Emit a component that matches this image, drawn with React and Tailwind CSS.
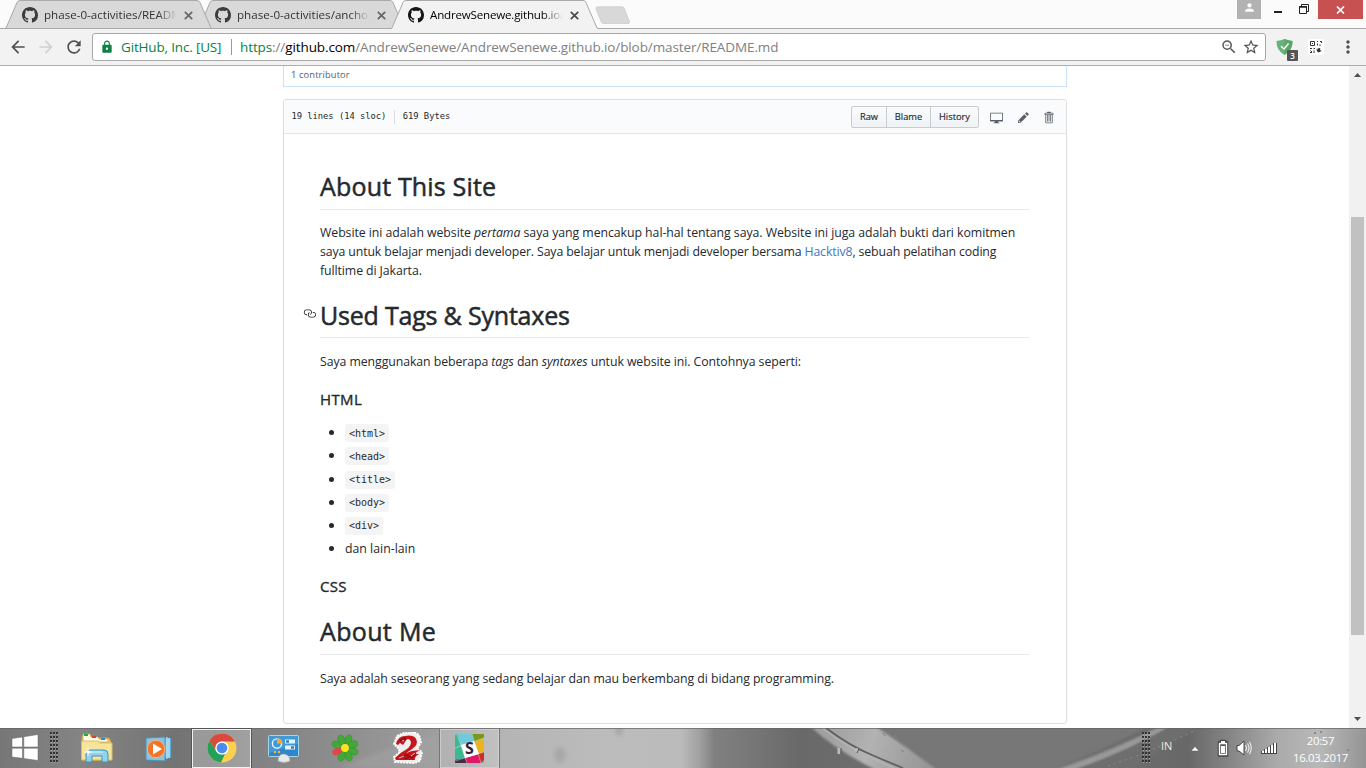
import React from "react";
import {
  MdArrowBack,
  MdArrowForward,
  MdRefresh,
  MdLock,
  MdZoomOut,
  MdStarBorder,
  MdMoreVert,
  MdPerson,
} from "react-icons/md";

const GITHUB =
  "M8 0C3.58 0 0 3.58 0 8c0 3.54 2.29 6.53 5.47 7.59.4.07.55-.17.55-.38 0-.19-.01-.82-.01-1.49-2.01.37-2.53-.49-2.69-.94-.09-.23-.48-.94-.82-1.13-.28-.15-.68-.52-.01-.53.63-.01 1.08.58 1.23.82.72 1.21 1.87.87 2.33.66.07-.52.28-.87.51-1.07-1.78-.2-3.64-.89-3.64-3.95 0-.87.31-1.59.82-2.15-.08-.2-.36-1.02.08-2.12 0 0 .67-.21 2.2.82.64-.18 1.32-.27 2-.27.68 0 1.36.09 2 .27 1.53-1.04 2.2-.82 2.2-.82.44 1.1.16 1.92.08 2.12.51.56.82 1.27.82 2.15 0 3.07-1.87 3.75-3.65 3.95.29.25.54.73.54 1.48 0 1.07-.01 1.93-.01 2.2 0 .21.15.46.55.38A8.013 8.013 0 0016 8c0-4.42-3.58-8-8-8z";
const DESKTOP =
  "M15 2H1c-.55 0-1 .45-1 1v9c0 .55.45 1 1 1h5.34c-.25.61-.86 1.39-2.34 2h8c-1.48-.61-2.09-1.39-2.34-2H15c.55 0 1-.45 1-1V3c0-.55-.45-1-1-1zm0 9H1V3h14v8z";
const PENCIL =
  "M0 12v3h3l8-8-3-3-8 8zm3 2H1v-2h1v1h1v1zm10.3-9.3L12 6 9 3l1.3-1.3a.996.996 0 0 1 1.41 0l1.59 1.59c.39.39.39 1.02 0 1.41z";
const TRASH =
  "M11 2H9c0-.55-.45-1-1-1H5c-.55 0-1 .45-1 1H2c-.55 0-1 .45-1 1v1c0 .55.45 1 1 1v9c0 .55.45 1 1 1h7c.55 0 1-.45 1-1V5c.55 0 1-.45 1-1V3c0-.55-.45-1-1-1zm-1 12H3V5h1v8h1V5h1v8h1V5h1v8h1V5h1v9zm1-10H2V3h9v1z";
const LINK =
  "M4 9h1v1H4c-1.5 0-3-1.69-3-3.5S2.55 3 4 3h4c1.45 0 3 1.69 3 3.5 0 1.41-.91 2.72-2 3.25V8.59c.58-.45 1-1.27 1-2.09C10 5.22 8.98 4 8 4H4c-.98 0-2 1.22-2 2.5S3 9 4 9zm9-3h-1v1h1c1 0 2 1.22 2 2.5S13.98 12 13 12H9c-.98 0-2-1.22-2-2.5 0-.83.42-1.64 1-2.09V6.25c-1.09.53-2 1.84-2 3.25C6 11.31 7.55 13 9 13h4c1.45 0 3-1.69 3-3.5S14.5 6 13 6z";

function Tab({ title, active, className }) {
  return (
    <div className={"relative h-[29px] w-[207px] shrink-0 " + className}>
      <svg className="absolute inset-0" width="207" height="29" viewBox="0 0 207 29">
        <path
          d="M0 29 L1 28 L12 2.5 Q13 .5 15 .5 H192 Q194 .5 195 2.5 L206 28 L207 29 Z"
          fill={active ? "#f2f2f2" : "#d9d9d9"}
        />
        <path
          d={
            active
              ? "M0 28.5 L1 28 L12 2.5 Q13 .5 15 .5 H192 Q194 .5 195 2.5 L206 28 L207 28.5"
              : "M0 28.5 L1 28 L12 2.5 Q13 .5 15 .5 H192 Q194 .5 195 2.5 L206 28 L207 28.5 Z"
          }
          fill="none"
          stroke="#a9a9a9"
        />
      </svg>
      <div className="relative flex h-[29px] items-center pt-px pl-[17px]">
        <svg width="16" height="16" viewBox="0 0 16 16" className="shrink-0">
          <path d={GITHUB} fill={active ? "#151515" : "#3c3c3c"} />
        </svg>
        <span
          className={
            "ml-1.5 w-[133px] overflow-hidden whitespace-nowrap text-[11.6px] leading-[18px] [mask-image:linear-gradient(to_right,black_85%,transparent)] " +
            (active ? "tracking-[-0.2px] text-black" : "text-[#333]")
          }
        >
          {title}
        </span>
        <svg width="9" height="9" viewBox="0 0 9 9" className="ml-[7px] shrink-0">
          <path d="M.8 .8L8.2 8.2M8.2 .8L.8 8.2" stroke={active ? "#4a4a4a" : "#666"} strokeWidth="1.7" />
        </svg>
      </div>
    </div>
  );
}

function TabStrip() {
  return (
    <div className="flex h-[29px] justify-between bg-[#fbfbfb] shadow-[inset_0_-1px_0_#a9a9a9]">
      <div className="flex pl-[5px]">
        <Tab title="phase-0-activities/README.md" className="z-10" />
        <Tab title="phase-0-activities/anchor.md" className="-ml-[14px]" />
        <Tab title="AndrewSenewe.github.io/README" active className="z-20 -ml-[14px]" />
        <svg width="36" height="19" viewBox="0 0 36 19" className="-ml-[3px] mt-[6px]">
          <path d="M3 .8H27Q28.5 .8 29.2 2.2L34.5 15.5Q35 17.5 33 17.5H8.5Q7 17.5 6.3 16L.8 2.5Q.5 .8 3 .8Z" fill="#d8d8d8" stroke="#c9c9c9" strokeWidth=".7" />
        </svg>
      </div>
      <div className="flex pr-[3px]">
        <div className="flex h-[19px] w-6 items-center justify-center bg-[#b2b2b2] pb-1">
          <MdPerson size={13} color="#fff" />
        </div>
        <svg width="57" height="19" viewBox="0 0 57 19">
          <rect x="13" y="11" width="8" height="2" fill="#222" />
          <path d="M38.5 6.5H45.5V13.5H38.5ZM40.5 6V4.5H47.5V11.5H46" fill="none" stroke="#222" />
          <path d="M38 7H46" stroke="#222" strokeWidth="1.5" />
        </svg>
        <div className="flex h-[19px] w-[45px] items-center justify-center bg-[#c75050]">
          <svg width="9" height="8" viewBox="0 0 9 8">
            <path d="M1 .5L8 7.5M8 .5L1 7.5" stroke="#fff" strokeWidth="1.7" />
          </svg>
        </div>
      </div>
    </div>
  );
}

function Toolbar() {
  return (
    <div className="flex h-[37px] items-center border-b border-[#aeaeae] bg-[#f2f2f2] pr-[8px] pl-2">
      <MdArrowBack size={20} color="#505050" />
      <MdArrowForward size={20} color="#d0d0d0" className="ml-2" />
      <MdRefresh size={20} color="#505050" className="ml-2" />
      <div className="ml-2 flex h-7 w-[1174px] shrink-0 items-center rounded-[3px] border border-[#a8a8a8] bg-white pr-[5px] pl-[7px] text-[13.5px] whitespace-nowrap">
        <MdLock size={14} color="#0b8043" />
        <span className="ml-[7px] w-[110px] tracking-[-0.17px] text-[#0b8043]">GitHub, Inc. [US]</span>
        <span className="mr-2 h-4 w-px bg-[#999]" />
        <span className="tracking-[-0.105px] text-[#808080]">
          <span className="text-[#0b8043]">https</span>://<span className="text-black">github.com</span>
          /AndrewSenewe/AndrewSenewe.github.io/blob/master/README.md
        </span>
        <MdZoomOut size={18} color="#5a5a5a" className="ml-auto" />
        <MdStarBorder size={18} color="#505050" className="ml-1" />
      </div>
      <div className="relative ml-[10px] h-[26px] w-[22px] shrink-0 pt-[5px]">
        <svg width="17" height="16" viewBox="0 0 17 16">
          <path d="M.5 2Q5 1.5 8.5 0Q12 1.5 16.5 2Q17 11 8.5 16Q0 11 .5 2Z" fill="#67b279" />
          <path d="M8.5 0Q12 1.5 16.5 2Q17 11 8.5 16Z" fill="#5aa66c" />
          <path d="M5 7.2L8 10L12.5 4.5" fill="none" stroke="#fff" strokeWidth="1.4" />
        </svg>
        <span className="absolute top-[16px] left-[11px] flex h-[11px] w-[11px] items-center justify-center rounded-[1px] bg-[#555] text-[8px] font-semibold text-white">
          3
        </span>
      </div>
      <svg width="16" height="16" viewBox="0 0 16 16" className="ml-[10px] shrink-0">
        <rect width="16" height="16" rx="2" fill="#fff" />
        <path d="M2.5 6.5V2.5H6.5V6.5H2.5M4 4.5H5M2 9.5H4M5.5 9.5H7M9 2.5H10M12 2.5H13.5V4M9.5 4.5V6.5M12 5.5V7M2.5 11.5L4 13M6 11.5V14M2 13.5H4" fill="none" stroke="#333" strokeWidth="1" />
        <path d="M8 9.5L9.5 11V9.5L12.5 9Q11 11 13.5 11.5Q12 14 9.5 13Z" fill="#333" />
      </svg>
      <MdMoreVert size={20} color="#505050" className="ml-auto" />
    </div>
  );
}

function OctIcon({ d, box, width, height }) {
  return (
    <svg width={width} height={height} viewBox={box}>
      <path d={d} fill="#586069" />
    </svg>
  );
}

function Heading({ children, anchor, className }) {
  return (
    <h1
      className={
        "relative border-b border-[#e8e9eb] text-[25px] font-medium whitespace-nowrap [-webkit-text-stroke:0.5px_#24292e] " + className
      }
    >
      {anchor && (
        <svg className="absolute top-[9px] -left-[17px]" width="13" height="13" viewBox="0 0 16 16">
          <path d={LINK} fill="#1b1f23" />
        </svg>
      )}
      {children}
    </h1>
  );
}

function ListItem({ children, plain }) {
  return (
    <li className="flex h-[20px] items-center">
      <span className="mr-[11px] ml-[9px] h-[5px] w-[5px] rounded-full bg-[#24292e]" />
      {plain ? (
        <span>{children}</span>
      ) : (
        <code className="mt-px flex h-[18px] items-center rounded-[3px] bg-[#f4f4f4] px-1 font-['DejaVu_Sans_Mono',monospace] text-[10px]">
          {children}
        </code>
      )}
    </li>
  );
}

function Readme() {
  return (
    <article className="h-[589px] px-9 pt-9 text-[12.3px] leading-[19.2px] whitespace-nowrap">
      <Heading className="h-10 leading-[33px] tracking-[0.17px]">About This Site</Heading>
      <p className="mt-[13px]">
        <span className="block tracking-[-0.053px]">
          Website ini adalah website <em>pertama</em> saya yang mencakup hal-hal tentang saya. Website ini juga adalah bukti dari komitmen
        </span>
        <span className="block tracking-[-0.118px]">
          saya untuk belajar menjadi developer. Saya belajar untuk menjadi developer bersama{" "}
          <span className="text-[#4078c0]">Hacktiv8</span>, sebuah pelatihan coding
        </span>
        <span className="block tracking-[-0.09px]">fulltime di Jakarta.</span>
      </p>
      <Heading anchor className="mt-[17px] h-10 leading-[35px] tracking-[-0.2px]">Used Tags &amp; Syntaxes</Heading>
      <p className="mt-[14px] tracking-[-0.07px]">
        Saya menggunakan beberapa <em>tags</em> dan <em>syntaxes</em> untuk website ini. Contohnya seperti:
      </p>
      <h3 className="mt-[18px] text-[15px] leading-5 font-medium tracking-[0.4px] [-webkit-text-stroke:0.35px_#24292e]">HTML</h3>
      <ul className="mt-[14px] flex flex-col gap-[3.1px]">
        <ListItem>&lt;html&gt;</ListItem>
        <ListItem>&lt;head&gt;</ListItem>
        <ListItem>&lt;title&gt;</ListItem>
        <ListItem>&lt;body&gt;</ListItem>
        <ListItem>&lt;div&gt;</ListItem>
        <ListItem plain>dan lain-lain</ListItem>
      </ul>
      <h3 className="mt-[18px] text-[15px] leading-5 font-medium tracking-[0.3px] [-webkit-text-stroke:0.35px_#24292e]">CSS</h3>
      <Heading className="mt-[18px] h-[41px] leading-[35px] tracking-[0.35px]">About Me</Heading>
      <p className="mt-[14px] tracking-[-0.065px]">
        Saya adalah seseorang yang sedang belajar dan mau berkembang di bidang programming.
      </p>
    </article>
  );
}

function Page() {
  return (
    <div className="flex h-[662px] bg-white text-[#24292e]">
      <main className="flex-1 overflow-hidden pl-[283px]">
        <div className="h-[21px] w-[784px] border border-t-0 border-[#c8e1ff] pl-[7px] text-[9.3px] leading-[18px] tracking-[0.13px] text-[#586069]">
          <span className="text-[#444d56]">1</span> contributor
        </div>
        <section className="mt-3 w-[784px] rounded-[3px] border border-[#ddd]">
          <header className="flex h-[34px] items-center rounded-t-[2px] border-b border-[#e1e4e8] bg-[#fafbfc] pt-px pr-3 pl-[7.5px] font-['DejaVu_Sans_Mono',monospace] text-[8.8px] tracking-[-0.03px]">
            <span>19 lines (14 sloc)</span>
            <span className="mr-2 ml-[7.5px] h-[14px] w-px bg-[#ddd]" />
            <span>619 Bytes</span>
            <div className="ml-auto flex h-[22px] divide-x divide-[#c9cbcd] rounded-[2px] border border-[#c9cbcd] bg-linear-to-b from-[#fafbfc] to-[#eff3f6] font-['Open_Sans',sans-serif] text-[9.3px] leading-[20px] font-medium tracking-normal [-webkit-text-stroke:0.15px_#24292e]">
              <span className="w-[35px] text-center">Raw</span>
              <span className="w-[44px] text-center">Blame</span>
              <span className="w-[47px] text-center">History</span>
            </div>
            <div className="ml-[11px] flex w-[64px] items-center justify-between">
              <OctIcon d={DESKTOP} box="0 0 16 16" width="13" height="13" />
              <OctIcon d={PENCIL} box="0 0 14 16" width="11" height="13" />
              <OctIcon d={TRASH} box="0.5 0 12 16" width="10" height="13" />
            </div>
          </header>
          <Readme />
        </section>
      </main>
      <div className="flex w-[17px] flex-col items-center bg-[#f1f1f1]">
        <svg width="17" height="17" viewBox="0 0 17 17">
          <path d="M5 11L8.5 7L12 11Z" fill="#505050" />
        </svg>
        <div className="mt-[134px] h-[418px] w-[13px] bg-[#c1c1c1]" />
        <svg width="17" height="17" viewBox="0 0 17 17" className="mt-auto">
          <path d="M5 6L8.5 10L12 6Z" fill="#505050" />
        </svg>
      </div>
    </div>
  );
}

function Wallpaper() {
  return (
    <svg className="absolute inset-0" width="1366" height="40" viewBox="0 0 1366 40">
      <defs>
        <linearGradient id="base" x1="0" x2="1366" y1="0" y2="0" gradientUnits="userSpaceOnUse">
          <stop offset="0" stopColor="#777" />
          <stop offset=".06" stopColor="#848484" />
          <stop offset=".13" stopColor="#737373" />
          <stop offset=".19" stopColor="#828282" />
          <stop offset=".26" stopColor="#909090" />
          <stop offset=".33" stopColor="#a0a0a0" />
          <stop offset=".37" stopColor="#b5b5b5" />
          <stop offset=".45" stopColor="#bcbcbc" />
          <stop offset=".499" stopColor="#bababa" />
          <stop offset=".512" stopColor="#a0a0a0" />
          <stop offset=".523" stopColor="#808080" />
          <stop offset=".55" stopColor="#777" />
          <stop offset=".585" stopColor="#696969" />
          <stop offset=".62" stopColor="#6c6c6c" />
          <stop offset=".66" stopColor="#707070" />
          <stop offset=".74" stopColor="#787878" />
          <stop offset=".8" stopColor="#6f6f6f" />
          <stop offset=".87" stopColor="#686868" />
          <stop offset=".9" stopColor="#858585" />
          <stop offset=".935" stopColor="#aaa" />
          <stop offset=".965" stopColor="#b8b8b8" />
          <stop offset="1" stopColor="#959595" />
        </linearGradient>
        <linearGradient id="petal" x1="830" x2="930" y1="0" y2="40" gradientUnits="userSpaceOnUse">
          <stop offset="0" stopColor="#a0a0a0" />
          <stop offset=".4" stopColor="#b2b2b2" />
          <stop offset="1" stopColor="#959595" />
        </linearGradient>
        <filter id="soft" x="-20%" y="-20%" width="140%" height="140%">
          <feGaussianBlur stdDeviation="2" />
        </filter>
        <filter id="edge" x="-5%" y="-5%" width="110%" height="110%">
          <feGaussianBlur stdDeviation=".8" />
        </filter>
      </defs>
      <rect width="1366" height="40" fill="url(#base)" />
      <path d="M875 -2Q900 25 935 42H1050Q1095 25 1150 -2Z" fill="#777" filter="url(#edge)" />
      <path d="M810 -2H875Q908 20 937 42H876Q835 22 810 -2Z" fill="url(#petal)" filter="url(#edge)" />
      <path d="M826 0Q850 18 872 27Q888 34 903 40" fill="none" stroke="#606060" strokeWidth="1.8" />
      <path d="M822 0Q846 18 868 28Q884 36 894 40" fill="none" stroke="#b8b8b8" strokeWidth="1.5" opacity=".7" />
      <path d="M1055 42Q1115 22 1160 -2H1172Q1125 25 1075 42Z" fill="#999" filter="url(#edge)" />
      <path d="M1075 42Q1125 25 1172 -2H1198Q1160 20 1130 42Z" fill="#6e6e6e" filter="url(#edge)" />
      <path d="M1108 38Q1150 24 1196 2" fill="none" stroke="#8e8e8e" strokeDasharray="2 4" />
      <ellipse cx="560" cy="27" rx="6" ry="8" fill="#a8a8a8" filter="url(#soft)" />
      <ellipse cx="619" cy="2" rx="4" ry="6" fill="#a8a8a8" filter="url(#soft)" />
      <path d="M839 20V26M855 23L858 21" stroke="#bbb" strokeWidth="3" />
      <path d="M841 20V26M857 25L859 21" stroke="#555" />
      <path d="M883 5L885 8M889 4L892 7M895 8Q899 9 897 13M901 22L904 24" fill="none" stroke="#808080" />
      <path d="M340 40Q380 22 440 5V40Z" fill="#a5a5a5" filter="url(#soft)" opacity=".5" />
      <rect width="1366" height="1" fill="#626262" opacity=".7" />
      <path d="M1314 5h2M1320 4h2M1347 22h2" stroke="#8a8a8a" strokeWidth="2" />
    </svg>
  );
}

function Grip({ className }) {
  return (
    <svg width="9" height="32" viewBox="0 0 9 32" className={className}>
      {[0, 4, 8, 12, 16, 20, 24, 28].map((y) => (
        <path key={y} d={`M0 ${y + 1}h2M3 ${y + 1}h2M6 ${y + 1}h2`} stroke="#333" strokeWidth="2" />
      ))}
      {[0, 4, 8, 12, 16, 20, 24, 28].map((y) => (
        <path key={y} d={`M1 ${y + 2.5}h1M4 ${y + 2.5}h1M7 ${y + 2.5}h1`} stroke="#aaa" />
      ))}
    </svg>
  );
}

function ExplorerIcon() {
  return (
    <svg width="34" height="32" viewBox="0 0 34 32">
      <path d="M2 3H8L9 5H29L31 9V27H2Z" fill="#e7c868" stroke="#c5a147" />
      <path d="M3 1H10L11 4H18L19 6H28V9H3Z" fill="#fffbe0" stroke="#c9a958" strokeWidth=".7" />
      <rect x="4" y="1" width="4" height="2" fill="#18ad35" />
      <rect x="12" y="3" width="4" height="2" fill="#dd4032" />
      <rect x="21" y="5" width="4" height="2" fill="#2889d8" />
      <path d="M1.5 8H18L20 10H32V27H1.5Z" fill="#f6e49b" stroke="#d8bd66" />
      <path d="M6 29V21Q6 17 10 17H24Q28 17 28 21V29H22V23H12V29Z" fill="#91d2ee" stroke="#4193bd" />
      <path d="M8 21Q8 19 11 19H23" stroke="#d9f5ff" fill="none" />
      <path d="M8 13L8.7 18L13 19L8.7 20L8 25L7.3 20L3 19L7.3 18Z" fill="#fff" />
    </svg>
  );
}

function MediaIcon() {
  return (
    <svg width="28" height="28" viewBox="0 0 28 28">
      <path d="M12 3H26V23H12Z" fill="#79bee5" stroke="#418fbd" />
      <path d="M22 2V24M24 3V23" stroke="#d3f0ff" />
      <path d="M1 3L20 2V26L1 25Z" fill="#8ac3df" stroke="#4d92b7" />
      <circle cx="11" cy="14" r="8.7" fill="#f37426" stroke="#f9b27f" />
      <path d="M8 8.5L17 14L8 19.5Z" fill="#fff" />
    </svg>
  );
}

function ChromeIcon() {
  return (
    <svg width="30" height="30" viewBox="0 0 30 30">
      <circle cx="15" cy="15" r="14.5" fill="#fcd051" />
      <path d="M2.4 7.7A14.5 14.5 0 0 1 28 8.5H15A6.6 6.6 0 0 0 9 18Z" fill="#db4a3f" />
      <path d="M2.4 7.7L9 18Q12 22 18 21L14 29.5A14.5 14.5 0 0 1 2.4 7.7Z" fill="#24a05a" />
      <circle cx="15" cy="15" r="6.6" fill="#fff" />
      <circle cx="15" cy="15" r="5.3" fill="#4b8bf4" />
    </svg>
  );
}

function ControlPanelIcon() {
  return (
    <svg width="32" height="28" viewBox="0 0 32 28">
      <rect x=".5" y=".5" width="30" height="21" rx="1" fill="#2f86c8" stroke="#a3d5ed" />
      <path d="M1 1H30V9L1 18Z" fill="#62b6e8" opacity=".4" />
      <circle cx="9" cy="8.5" r="4.6" fill="none" stroke="#eaf7ff" strokeWidth="1.4" />
      <path d="M9 8.5V3A5.5 5.5 0 0 1 14.5 8.5Z" fill="#f7a83a" />
      <path d="M17 6.5H27M17 12.5H27" stroke="#e4f4fd" strokeWidth="4" />
      <path d="M18 6.5H21M23 12.5H26" stroke="#2c83c1" strokeWidth="2.4" />
      <circle cx="7" cy="17" r="1.3" fill="#f2b340" />
      <circle cx="11" cy="17" r="1.3" fill="#f2b340" />
      <path d="M10 26Q10 19 16 19Q22 20 22 26Q16 29 10 26Z" fill="#e9e9e9" stroke="#aaa" strokeWidth=".6" />
    </svg>
  );
}

function FlowerIcon() {
  return (
    <svg width="28" height="28" viewBox="0 0 28 28">
      {[22, 67, 112, 157, 202, 292, 337].map((a) => (
        <ellipse key={a} cx="14" cy="5.2" rx="3.5" ry="5.1" fill="#43a838" stroke="#2f922b" strokeWidth=".5" transform={`rotate(${a} 14 14)`} />
      ))}
      <ellipse cx="14" cy="5.2" rx="3.3" ry="4.8" fill="#e24545" transform="rotate(247 14 14)" />
      <circle cx="14" cy="14" r="3.9" fill="#fde51c" />
    </svg>
  );
}

function DragonIcon() {
  return (
    <svg width="32" height="32" viewBox="0 0 32 32">
      <path d="M5 4L12 1L22 0L27 3L29 10L25 17L30 20L28 29L22 31L3 30L2 25L8 20L6 16L2 12Z" fill="#eee" stroke="#fff" strokeWidth="2" strokeDasharray="2 1" />
      <path d="M4 12Q6 4 13 4Q24 2 25 10Q25 15 14 21L20 19L28 18Q24 20 23 22L27 22Q22 25 23 28L4 28L3 26Q9 20 15 17Q21 12 18 8Q15 5 13 10L11 13L8 11L6 13Z" fill="#c5161c" />
      <path d="M8 9L12 6L14 8M9 25L15 23L20 26L24 21M13 27L17 25" fill="none" stroke="#7d0d11" strokeWidth="1.1" />
      <path d="M10 9L12 8.5M7 26L12 24M19 24L23 21" stroke="#fff" strokeWidth=".7" />
    </svg>
  );
}

function SlackIcon() {
  return (
    <div className="relative flex h-[29px] w-[29px] items-center justify-center">
      <svg width="29" height="29" viewBox="0 0 29 29" className="absolute inset-0">
        <rect width="29" height="29" rx="2" fill="#3eb890" />
        <path d="M3 0H17L19 8L6 12Z" fill="#70cadb" />
        <path d="M17 0H29V4L19 8Z" fill="#78991c" />
        <path d="M29 4V18L23 20L19 8Z" fill="#ecb220" />
        <path d="M23 20L29 18V26L25 29Z" fill="#ca2f27" />
        <path d="M10 24L23 20L26 29H12Z" fill="#e01765" />
        <path d="M0 26L10 24L12 29H0Z" fill="#472a49" />
        <path d="M6 11L19 7L24 20L10 24Z" fill="#fff" />
        <path d="M2 0L12 29M17 0L26 29M0 14L29 4M0 27L29 18" stroke="#fff" strokeWidth=".8" opacity=".45" />
      </svg>
      <span className="relative text-[16px] leading-none font-bold text-[#391c3c]">S</span>
    </div>
  );
}

function Taskbar() {
  return (
    <footer className="relative h-10 overflow-hidden">
      <Wallpaper />
      <div className="relative flex h-10 items-center">
        <svg width="30" height="30" viewBox="0 0 30 30" className="ml-[11px] shrink-0">
          <path d="M1 5.5L11.5 4V14H1ZM12.8 3.8L27 1.5V14H12.8ZM1 15.2H11.5V25.3L1 24ZM12.8 15.2H27V27.5L12.8 25.5Z" fill="#fff" stroke="#666" strokeWidth=".5" />
        </svg>
        <Grip className="ml-[9px]" />
        <div className="ml-[21px] flex w-[34px] justify-center pt-px"><ExplorerIcon /></div>
        <div className="ml-[31px] pt-px"><MediaIcon /></div>
        <div className="ml-[19px] flex h-[39px] w-[59px] items-center justify-center border border-[#f1f1f1] bg-white/25 outline outline-[#555]"><ChromeIcon /></div>
        <div className="ml-[17px] pt-[2px]"><ControlPanelIcon /></div>
        <div className="ml-[31px]"><FlowerIcon /></div>
        <div className="ml-[33px]"><DragonIcon /></div>
        <div className="ml-[16px] flex h-[39px] w-[59px] items-center justify-center border border-[#ccc] bg-white/20 outline outline-[#777]"><SlackIcon /></div>
        <Grip className="ml-auto" />
        <span className="ml-[10px] w-[20px] pb-1 text-[11px] tracking-[-.1px] text-[#ededde]">IN</span>
        <svg width="90" height="24" viewBox="0 0 90 24" className="ml-[9px]">
          <path d="M1 15L5 10.5L9 15Z" fill="#fff" stroke="#555" strokeWidth=".5" />
          <path d="M29 6.5H31V5H35V6.5H37V19.5H29Z" fill="#444" stroke="#444" strokeWidth="2.5" />
          <path d="M29.5 7.5H36.5V18.5H29.5Z" fill="#555" stroke="#fff" strokeWidth="1.4" />
          <path d="M31 10H35V17H31ZM31 5H35V7H31Z" fill="#fff" />
          <path d="M47 9.5H49L54 5V19L49 15H47Z" fill="#fff" stroke="#444" />
          <path d="M55.5 9Q57.5 12 55.5 15M57.5 7.5Q60.5 12 57.5 16.5M59.5 6Q63 12 59.5 18" fill="none" stroke="#eee" strokeWidth="1.1" />
          <path d="M71 18V15H74V13H77V11H80V9H83V7H87V18Z" fill="#444" />
          <path d="M72 15H74V17H72ZM75 13H77V17H75ZM78 11H80V17H78ZM81 9H83V17H81ZM84 7H86V17H84Z" fill="#fff" />
        </svg>
        <div className="mr-[16px] ml-[11px] w-[59px] pt-px text-center text-[11.3px] leading-[17px] tracking-[-.25px] whitespace-nowrap text-white">
          <div>20:57</div>
          <div>16.03.2017</div>
        </div>
      </div>
    </footer>
  );
}

export default function App() {
  return (
    <div className="h-[768px] w-[1366px] overflow-hidden bg-white font-['Open_Sans',sans-serif]">
      <TabStrip />
      <Toolbar />
      <Page />
      <Taskbar />
    </div>
  );
}
